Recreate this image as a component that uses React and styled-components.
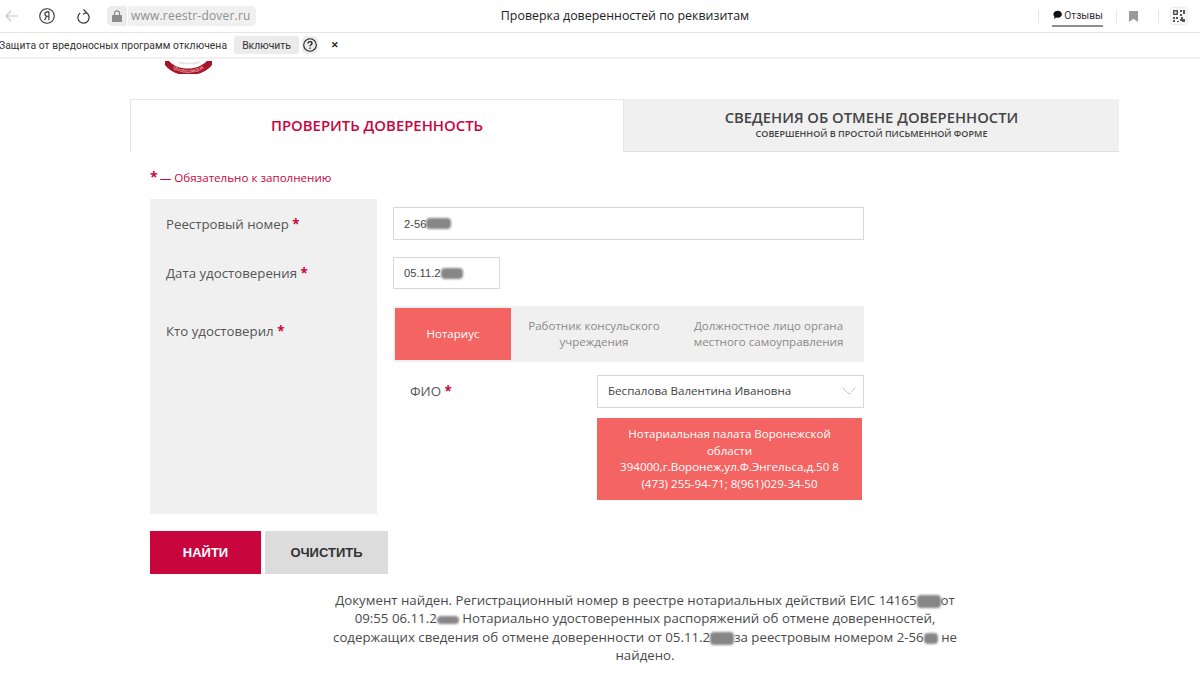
import styled, { createGlobalStyle } from 'styled-components';

const GlobalStyle = createGlobalStyle`
  html, body { margin: 0; padding: 0; background: #fff; }
  body { font-family: "Open Sans", "Noto Sans", sans-serif; color: #444; overflow: hidden; }
  * { box-sizing: border-box; }
`;

const Page = styled.div`
  width: 1200px;
  height: 673px;
  overflow: hidden;
`;

/* browser chrome */
const BrowserBar = styled.div`
  height: 33px;
  display: flex;
  align-items: center;
  border-bottom: 1px solid #e6e6e6;
  position: relative;
`;

const NavIcon = styled.div`
  width: ${p => p.$w}px;
  display: flex;
  justify-content: center;
  color: ${p => p.$color || '#333'};
`;

const LockBox = styled.div`
  width: 20px;
  height: 20px;
  margin-left: 13px;
  background: #ececec;
  border-radius: 5px 2px 2px 5px;
  display: flex;
  align-items: center;
  justify-content: center;
`;

const UrlBox = styled.div`
  height: 20px;
  margin-left: 1px;
  padding: 0 5px 0 3px;
  background: #f0f0f0;
  border-radius: 2px 5px 5px 2px;
  font-size: 12px;
  line-height: 20px;
  color: #8f8f8f;
  letter-spacing: 0.2px;
`;

const PageTitle = styled.div`
  position: absolute;
  left: 0;
  right: 0;
  top: 7px;
  text-align: center;
  font-size: 12.4px;
  line-height: 18px;
  color: #222;
  padding-left: 50px;
`;

const BarRight = styled.div`
  margin-left: auto;
  display: flex;
  align-items: center;
  height: 100%;
`;

const Divider = styled.div`
  width: 1px;
  height: 13px;
  background: #e8e8e8;
`;

const Reviews = styled.div`
  margin: 0 13px 0 13px;
  width: 51px;
  height: 22px;
  display: flex;
  align-items: flex-start;
  gap: 2px;
  padding: 4px 0 0 1px;
  font-family: "Roboto", sans-serif;
  font-size: 10.2px;
  line-height: 14px;
  color: #333;
  white-space: nowrap;
  border-bottom: 2px solid #8c8c8c;
`;

const BookmarkSlot = styled.div`
  width: 41px;
  padding-right: 9px;
  display: flex;
  justify-content: center;
`;

const QrSlot = styled.div`
  width: 16px;
  height: 16px;
  margin-left: 12px;
  margin-right: 13px;
  box-shadow: 0 0 2px rgba(0, 0, 0, 0.25);
  border-radius: 2px;
  display: flex;
`;

const InfoBar = styled.div`
  height: 26px;
  display: flex;
  align-items: center;
  border-bottom: 2px solid #f0f0f0;
  color: #333;
  white-space: nowrap;
  font-family: "Roboto", sans-serif;
`;

const InfoText = styled.span`
  margin-left: -1px;
  font-size: 10.3px;
  letter-spacing: 0.08px;
`;

const EnableBtn = styled.div`
  margin-left: 7px;
  width: 65px;
  height: 18px;
  background: #ebebeb;
  border-radius: 3px;
  text-align: center;
  line-height: 19px;
  font-size: 10.4px;
`;

const HelpBtn = styled.div`
  margin-left: 3px;
  width: 16px;
  height: 18px;
  background: #ebebeb;
  border-radius: 5px;
  display: flex;
  align-items: center;
  justify-content: center;
`;

const CloseMark = styled.span`
  margin-left: 13px;
  font-size: 9px;
  font-weight: 700;
  color: #222;
`;

/* site */
const LogoCrop = styled.div`
  margin-left: 164px;
  height: 15px;
  width: 50px;
  overflow: hidden;
`;

const Tabs = styled.div`
  margin: 25px 0 0 130px;
  width: 989px;
  height: 53px;
  display: flex;
`;

const ActiveTab = styled.div`
  width: 494px;
  border: 1px solid #e6e6e6;
  border-bottom: 0;
  padding-bottom: 2px;
  display: flex;
  align-items: center;
  justify-content: center;
  color: #c8063d;
  font-size: 14.9px;
  font-weight: 600;
`;

const IdleTab = styled.div`
  flex: 1;
  background: #f0f0f0;
  border-bottom: 1px solid #e0e0e0;
  text-align: center;
  color: #444;
  padding-top: 9px;
  font-size: 14.8px;
  line-height: 19px;
  font-weight: 600;
  small {
    display: block;
    margin-top: 1px;
    font-size: 9.05px;
    line-height: 11px;
    font-weight: 600;
  }
`;

const Required = styled.div`
  margin: 16px 0 0 150px;
  height: 18px;
  font-size: 11.6px;
  line-height: 18px;
  color: #c8063d;
  b { font-size: 14px; margin-right: -1px; }
`;

const Form = styled.div`
  margin: 13px 0 0 150px;
  width: 714px;
  height: 315px;
  display: flex;
`;

const Labels = styled.div`
  width: 227px;
  background: #f0f0f0;
  padding: 16px 16px 0;
`;

const Label = styled.div`
  height: ${p => p.$h}px;
  font-size: 13.25px;
  line-height: 19px;
  color: #555;
  white-space: nowrap;
`;

const Star = styled.b`
  color: #c8063d;
  font-weight: 700;
`;

const Fields = styled.div`
  margin-left: 16px;
  width: 471px;
  padding-top: 8px;
`;

const TextInput = styled.div`
  width: ${p => p.$w}px;
  height: ${p => p.$h}px;
  margin-bottom: ${p => p.$mb}px;
  border: 1px solid #d8d8d8;
  padding-left: 10px;
  display: flex;
  align-items: center;
  font-family: "Liberation Sans", Arial, sans-serif;
  font-size: 11.2px;
  color: #444;
`;

const Blur = styled.span`
  display: inline-block;
  width: ${p => p.$w}px;
  height: ${p => p.$h || 11}px;
  background: #868686;
  border-radius: 4px;
  filter: blur(0.8px);
  vertical-align: middle;
`;

const Segments = styled.div`
  height: 56px;
  width: 471px;
  background: #f0f0f0;
  display: flex;
  padding: 2px 0;
`;

const Segment = styled.div`
  width: ${p => p.$w}px;
  margin-left: ${p => p.$ml || 0}px;
  background: ${p => (p.$active ? '#f46462' : 'transparent')};
  color: ${p => (p.$active ? '#fff' : '#8a8a8a')};
  display: flex;
  align-items: center;
  justify-content: center;
  text-align: center;
  font-size: 11.55px;
  line-height: 16.5px;
`;

const FioRow = styled.div`
  margin-top: 13px;
  display: flex;
`;

const FioLabel = styled.div`
  width: 204px;
  padding: 7px 0 0 17px;
  font-size: 13.3px;
  line-height: 19px;
  color: #555;
`;

const FioColumn = styled.div`
  width: 267px;
`;

const Select = styled.div`
  height: 33px;
  border: 1px solid #d8d8d8;
  padding: 0 7px 2px 10px;
  display: flex;
  align-items: center;
  justify-content: space-between;
  font-size: 11.6px;
  color: #444;
`;

const NotaryBox = styled.div`
  margin-top: 10px;
  width: 265px;
  height: 82px;
  padding-top: 8px;
  background: #f46462;
  color: #fff;
  text-align: center;
  font-size: 11.55px;
  line-height: 16.6px;
`;

const Buttons = styled.div`
  margin: 17px 0 0 150px;
  display: flex;
  gap: 4px;
`;

const Button = styled.div`
  width: ${p => p.$w}px;
  height: 43px;
  background: ${p => (p.$primary ? '#c8063d' : '#dcdcdc')};
  color: ${p => (p.$primary ? '#fff' : '#333')};
  font-family: "Liberation Sans", Arial, sans-serif;
  font-weight: 700;
  font-size: 13px;
  display: flex;
  align-items: center;
  justify-content: center;
`;

const Result = styled.div`
  margin: 17px 0 0 325px;
  width: 640px;
  text-align: center;
  font-size: 13.25px;
  line-height: 18.3px;
  color: #4a4a4a;
  white-space: nowrap;
`;

const App = () => (
  <Page>
    <GlobalStyle />
    <BrowserBar>
      <NavIcon $w={22} $color="#c4c4c4">
        <svg width="13" height="12" viewBox="0 0 13 12" fill="none" stroke="currentColor" strokeWidth="1.1">
          <path d="M12.5 6H1M6 1 1 6l5 5" />
        </svg>
      </NavIcon>
      <NavIcon $w={50}>
        <svg width="16" height="16" viewBox="0 0 16 16" fill="none" stroke="#333" strokeWidth="1.1">
          <circle cx="8" cy="8" r="7.3" />
          <path d="M9.9 12.2V3.9H8.2C6.7 3.9 5.9 4.8 5.9 6.1S6.7 8.3 8.2 8.3H9.9M7.5 8.3 5.6 12.2" />
        </svg>
      </NavIcon>
      <NavIcon $w={22}>
        <svg width="13" height="15" viewBox="0 0 13 15" fill="none" stroke="#333" strokeWidth="1.2">
          <path d="M3.2 4A5.6 5.600 0 1 0 9.500 3.800" />
          <path d="M6.500.5 9.500 3.600 6 5.200" />
        </svg>
      </NavIcon>
      <LockBox>
        <svg width="10" height="12" viewBox="0 0 10 12">
          <path d="M1 5h8a1 1 0 0 1 1 1v5a1 1 0 0 1-1 1H1a1 1 0 0 1-1-1V6a1 1 0 0 1 1-1Z" fill="#8a8a8a" />
          <path d="M2.500 5V3.300a2.500 2.500 0 0 1 5 0V5" fill="none" stroke="#8a8a8a" strokeWidth="1.2" />
        </svg>
      </LockBox>
      <UrlBox>www.reestr-dover.ru</UrlBox>
      <PageTitle>Проверка доверенностей по реквизитам</PageTitle>
      <BarRight>
        <Divider />
        <Reviews>
          <svg width="10" height="10" viewBox="0 0 10 10" style={{ marginTop: 1 }}>
            <path d="M5 .3c2.600 0 4.600 1.600 4.600 3.900S7.600 8 5 8c-.5 0-1 0-1.400-.2L1 9.400l.7-2.500C.9 6.200.4 5.300.4 4.200.4 1.900 2.400.3 5 .3Z" fill="#111" />
          </svg>
          Отзывы
        </Reviews>
        <Divider />
        <BookmarkSlot>
          <svg width="9" height="11" viewBox="0 0 9 11">
            <path d="M0 0h9v11L4.500 7.800 0 11Z" fill="#9a9a9a" />
          </svg>
        </BookmarkSlot>
        <Divider />
        <QrSlot>
          <svg width="16" height="16" viewBox="0 0 16 16">
            <rect width="16" height="16" rx="2" fill="#f7f7f7" />
            <path d="M2 2h5v5H2Zm1.500 1.500v2h2v-2ZM9 2h2v2H9Zm3 0h2v4h-2ZM9 6h2v2H9ZM2 9h2v2H2Zm3 0h2v2H5Zm-3 3h2v2H2Zm4 1h2v1H6Zm4-4h2v2h2v3h-3v-1h-2v-2h1Z" fill="#555" />
          </svg>
        </QrSlot>
      </BarRight>
    </BrowserBar>
    <InfoBar>
      <InfoText>Защита от вредоносных программ отключена</InfoText>
      <EnableBtn>Включить</EnableBtn>
      <HelpBtn>
        <svg width="14" height="14" viewBox="0 0 14 14" fill="none" stroke="#222" strokeWidth="1.1">
          <circle cx="7" cy="7" r="6.300" />
          <path d="M5 5.400C5 4.200 5.900 3.600 7 3.600s2 .7 2 1.700c0 1.500-2 1.500-2 3" strokeWidth="1.400" />
          <path d="M7 9.500v1.300" strokeWidth="1.400" />
        </svg>
      </HelpBtn>
      <CloseMark>✕</CloseMark>
    </InfoBar>

    <LogoCrop>
      <svg width="50" height="15" viewBox="0 0 50 15">
        <path d="M14 1C18 3 32 3 36 1" fill="none" stroke="#e4e4e4" strokeWidth="1.500" />
        <path d="M1 0V4C6 11 16 14.500 24 14.500S43 11 48 4V0H43C38 5 31 7.500 24 7.500S9 5 5 0Z" fill="#a8142c" />
        <path id="logo-band" d="M6 5C11 9.500 18 12 24 12S38 9.500 43 5" fill="none" />
        <text fontFamily="Liberation Sans, sans-serif" fontSize="4.400" fontWeight="700" fill="#e3b0a4" textAnchor="middle">
          <textPath href="#logo-band" startOffset="50%">QUODCUMQUE</textPath>
        </text>
      </svg>
    </LogoCrop>

    <Tabs>
      <ActiveTab>ПРОВЕРИТЬ ДОВЕРЕННОСТЬ</ActiveTab>
      <IdleTab>
        СВЕДЕНИЯ ОБ ОТМЕНЕ ДОВЕРЕННОСТИ
        <small>СОВЕРШЕННОЙ В ПРОСТОЙ ПИСЬМЕННОЙ ФОРМЕ</small>
      </IdleTab>
    </Tabs>

    <Required><b>*</b> — Обязательно к заполнению</Required>

    <Form>
      <Labels>
        <Label $h={49}>Реестровый номер <Star>*</Star></Label>
        <Label $h={58}>Дата удостоверения <Star>*</Star></Label>
        <Label $h={20}>Кто удостоверил <Star>*</Star></Label>
      </Labels>
      <Fields>
        <TextInput $w={471} $h={33} $mb={17}>2-56<Blur $w={25} /></TextInput>
        <TextInput $w={107} $h={32} $mb={17}>05.11.2<Blur $w={22} /></TextInput>
        <Segments>
          <Segment $active $w={116} $ml={2}>Нотариус</Segment>
          <Segment $w={166}>Работник консульского<br />учреждения</Segment>
          <Segment $w={167} $ml={8}>Должностное лицо органа<br />местного самоуправления</Segment>
        </Segments>
        <FioRow>
          <FioLabel>ФИО <Star>*</Star></FioLabel>
          <FioColumn>
            <Select>
              Беспалова Валентина Ивановна
              <svg width="14" height="8" viewBox="0 0 14 8" fill="none" stroke="#c8c8c8">
                <path d="M.5.500 7 7l6.500-6.500" />
              </svg>
            </Select>
            <NotaryBox>
              Нотариальная палата Воронежской<br />
              области<br />
              394000,г.Воронеж,ул.Ф.Энгельса,д.50 8<br />
              (473) 255-94-71; 8(961)029-34-50
            </NotaryBox>
          </FioColumn>
        </FioRow>
      </Fields>
    </Form>

    <Buttons>
      <Button $primary $w={111}>НАЙТИ</Button>
      <Button $w={123}>ОЧИСТИТЬ</Button>
    </Buttons>

    <Result>
      Документ найден. Регистрационный номер в реестре нотариальных действий ЕИС 14165<Blur $w={24} $h={13} />от<br />
      09:55 06.11.2<Blur $w={22} $h={8} /> Нотариально удостоверенных распоряжений об отмене доверенностей,<br />
      содержащих сведения об отмене доверенности от 05.11.2<Blur $w={24} $h={13} />за реестровым номером 2-56<Blur $w={14} $h={11} /> не<br />
      найдено.
    </Result>
  </Page>
);

export default App;
